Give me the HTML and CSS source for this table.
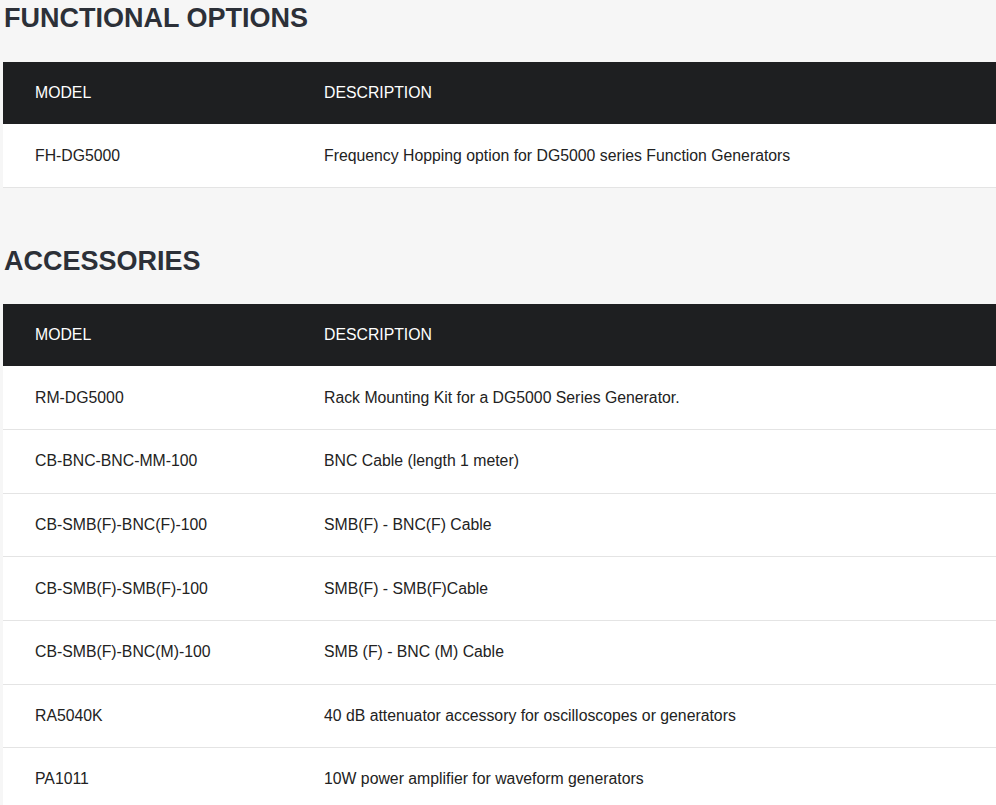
FILE: index.html
```html
<!DOCTYPE html>
<html lang="en">
<head>
<meta charset="utf-8">
<title>Options and Accessories</title>
<link rel="stylesheet" href="styles.css">
</head>
<body>
<section class="block">
  <h2 class="title">FUNCTIONAL OPTIONS</h2>
  <table class="spec">
    <thead>
      <tr><th class="c-model">MODEL</th><th>DESCRIPTION</th></tr>
    </thead>
    <tbody>
      <tr><td>FH-DG5000</td><td>Frequency Hopping option for DG5000 series Function Generators</td></tr>
    </tbody>
  </table>
</section>
<section class="block second">
  <h2 class="title">ACCESSORIES</h2>
  <table class="spec">
    <thead>
      <tr><th class="c-model">MODEL</th><th>DESCRIPTION</th></tr>
    </thead>
    <tbody>
      <tr><td>RM-DG5000</td><td>Rack Mounting Kit for a DG5000 Series Generator.</td></tr>
      <tr><td>CB-BNC-BNC-MM-100</td><td>BNC Cable (length 1 meter)</td></tr>
      <tr><td>CB-SMB(F)-BNC(F)-100</td><td>SMB(F) - BNC(F) Cable</td></tr>
      <tr><td>CB-SMB(F)-SMB(F)-100</td><td>SMB(F) - SMB(F)Cable</td></tr>
      <tr><td>CB-SMB(F)-BNC(M)-100</td><td>SMB (F) - BNC (M) Cable</td></tr>
      <tr><td>RA5040K</td><td>40 dB attenuator accessory for oscilloscopes or generators</td></tr>
      <tr><td>PA1011</td><td>10W power amplifier for waveform generators</td></tr>
    </tbody>
  </table>
</section>
</body>
</html>
```
FILE: styles.css
```css
html, body {
  margin: 0;
  padding: 0;
  background: #f6f6f6;
}
body {
  padding-left: 3px;
  font-family: "Liberation Sans", Arial, sans-serif;
  color: #222;
  overflow: hidden;
}
.block.second {
  margin-top: 55px;
}
.title {
  margin: 0 0 26px 1px;
  font-size: 27px;
  line-height: 36px;
  font-weight: 700;
  color: #2c3038;
}
.block.second .title {
  margin-bottom: 25px;
}
.spec {
  width: 993px;
  border-collapse: collapse;
  font-size: 15.8px;
}
.spec th {
  background: #1e1f21;
  color: #fff;
  font-weight: 400;
  text-align: left;
  height: 62px;
  padding: 0 0 0 32px;
  vertical-align: middle;
}
.spec th.c-model {
  width: 257px;
}
.spec td {
  background: #fff;
  height: 63.6px;
  padding: 0 0 0 32px;
  border-bottom: 1px solid #e4e4e4;
  vertical-align: middle;
  box-sizing: border-box;
}
```
